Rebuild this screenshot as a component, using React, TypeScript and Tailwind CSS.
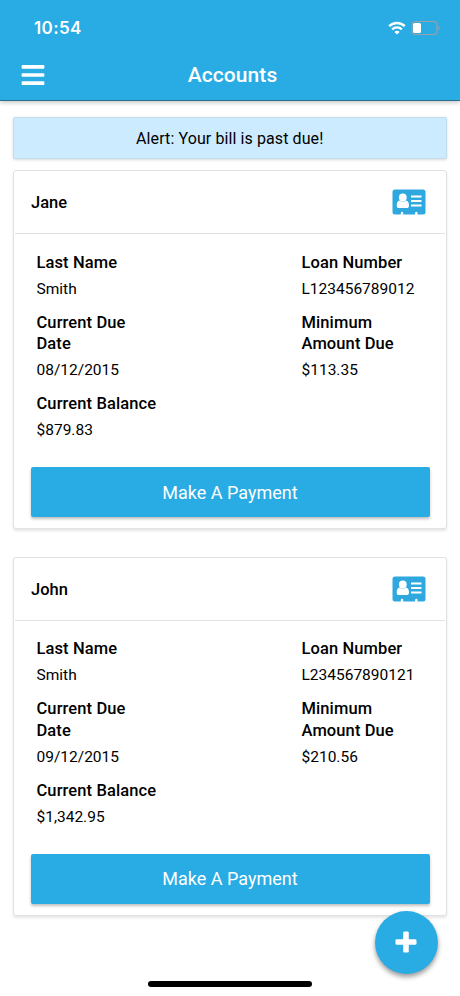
import {FaBars} from 'react-icons/fa'

const accounts = [
    {
        name: 'Jane',
        lastName: 'Smith',
        loanNumber: 'L123456789012',
        dueDate: '08/12/2015',
        minimumDue: '$113.35',
        balance: '$879.83',
    },
    {
        name: 'John',
        lastName: 'Smith',
        loanNumber: 'L234567890121',
        dueDate: '09/12/2015',
        minimumDue: '$210.56',
        balance: '$1,342.95',
    },
]

type Account = (typeof accounts)[number]

function WifiIcon() {
  return (
    <svg className="w-[18px] h-[14px]" viewBox="0 0 18 14" fill="none">
        <path d="M1.2 5.1C5.6 0.8 12.4 0.8 16.8 5.1" stroke="white" strokeWidth="2.5"/>
        <path d="M4.1 8.3C6.9 5.7 11.1 5.7 13.9 8.3" stroke="white" strokeWidth="2.4"/>
        <path d="M9 13.6L6.4 10.9C7.9 9.5 10.1 9.5 11.6 10.9Z" fill="white"/>
    </svg>
  )
}

function BatteryIcon() {
  return (
    <svg className="w-[30px] h-[16px]" viewBox="0 0 30 16" fill="none">
        <rect x="1" y="1.5" width="25" height="13" rx="3.2" stroke="#9a9fa8" strokeWidth="1.2"/>
        <rect x="2" y="3" width="8" height="10" rx="1.5" fill="white"/>
        <path d="M27.4 6V10C28.3 9.7 28.8 9 28.8 8C28.8 7 28.3 6.3 27.4 6Z" fill="#9a9fa8"/>
    </svg>
  )
}

function CardIcon() {
  return (
    <svg className="w-[34px] h-[26px]" viewBox="0 0 34 26" fill="none">
        <path d="M3 0.5H31A2.5 2.5 0 0 1 33.5 3V23A2.5 2.5 0 0 1 31 25.5H25.5V24A1.2 1.2 0 0 0 23.1 24V25.5H11.2V24A1.2 1.2 0 0 0 8.8 24V25.5H3A2.5 2.5 0 0 1 0.5 23V3A2.5 2.5 0 0 1 3 0.5Z" fill="#2fa8e0"/>
        <ellipse cx="10.8" cy="8.6" rx="3.9" ry="4.1" fill="white"/>
        <path d="M7.7 11.6C9.5 13.2 12.1 13.2 13.9 11.6C16 11.9 17 13.6 17 16.4C17 18 16.1 19 14.8 19H6.8C5.5 19 4.7 18 4.7 16.4C4.7 13.6 5.6 11.9 7.7 11.6Z" fill="white"/>
        <path d="M19 7.5H29.5M19 12H29.5M19 16.6H29.5" stroke="white" strokeWidth="2"/>
    </svg>
  )
}

function PlusIcon() {
  return (
    <svg className="size-[22px]" viewBox="0 0 22 22" fill="white">
        <rect x="0.5" y="8.2" width="21" height="5.6" rx="1.3"/>
        <rect x="8.2" y="0.5" width="5.6" height="21" rx="1.3"/>
    </svg>
  )
}

function Field({label, value}: {label: string; value: string}) {
  return (
    <div className="mb-[11.5px]">
        <dt className="font-medium leading-[21.5px]">{label}</dt>
        <dd className="mt-[5.5px] text-[15.5px] leading-[21.5px] tracking-normal">{value}</dd>
    </div>
  )
}

function AccountCard({account}: {account: Account}) {
  return (
    <section className="h-[359px] rounded-[3px] border border-[#e2e2e2] bg-white shadow-[0_2px_3px_rgba(0,0,0,0.1)]">
        <div className="mx-px h-[63px] flex items-center justify-between border-b border-[#e2e2e2] pl-4 pr-[19px]">
            <h2 className="pt-[3px] text-[16.5px] font-medium">{account.name}</h2>
            <CardIcon/>
        </div>

        <dl className="flex h-[233px] justify-between pt-[17.6px] pl-[22.5px] pr-[23px] text-[16.5px] tracking-[0.1px]">
            <div className="w-[125px]">
                <Field label="Last Name" value={account.lastName}/>
                <div className="w-[100px]"><Field label="Current Due Date" value={account.dueDate}/></div>
                <Field label="Current Balance" value={account.balance}/>
            </div>
            <div className="w-[121px]">
                <Field label="Loan Number" value={account.loanNumber}/>
                <div className="w-[100px]"><Field label="Minimum Amount Due" value={account.minimumDue}/></div>
            </div>
        </dl>

        <button className="ml-[16.5px] block h-[50px] w-[399px] rounded-[2px] bg-[#29abe4] pt-px text-lg text-white shadow-[0_2px_3px_rgba(0,0,0,0.25)]">Make A Payment</button>
    </section>
  )
}

export default function App() {
  return (
    <div className="relative flex h-[996px] w-[460px] flex-col overflow-hidden bg-white font-[Roboto,sans-serif] text-base text-black">
        <header className="h-[101px] shrink-0 border-b border-[#2b6f8c] bg-[#29abe4] text-white shadow-[0_2px_4px_rgba(0,0,0,0.2)]">
            <div className="flex h-[50px] items-center justify-between pt-[6px] pl-[34px] pr-[19px]">
                <span className="pt-px font-[Inter,sans-serif] text-[17px] font-semibold tracking-[0.4px]">10:54</span>
                <div className="flex items-center gap-[5px]">
                    <WifiIcon/>
                    <BatteryIcon/>
                </div>
            </div>
            <div className="grid h-[50px] grid-cols-[1fr_auto_1fr] items-center pl-[20px] pr-[15px]">
                <FaBars className="size-[26px]"/>
                <h1 className="pt-px text-[21px] font-medium tracking-[0.1px]">Accounts</h1>
            </div>
        </header>

        <main className="flex flex-col pl-[13px] pr-[13.5px] pt-4">
            <div className="flex h-[42px] items-center justify-center rounded-[2px] border border-[#c3dce9] bg-[#cdebff] pt-px text-[16px] tracking-[0.1px] shadow-[0_1px_3px_rgba(0,0,0,0.15)]">Alert: Your bill is past due!</div>
            <div className="mt-[11px] flex flex-col gap-[27.5px]">
                {accounts.map((account) => (
                    <AccountCard key={account.name} account={account}/>
                ))}
            </div>
        </main>

        <button aria-label="Add account" className="absolute left-[375px] top-[911px] flex size-[63px] items-center justify-center rounded-full bg-[#29abe4] pr-[2px] pb-[2px] text-white shadow-[0_3px_5px_rgba(0,0,0,0.4)]">
            <PlusIcon/>
        </button>
        <div className="absolute bottom-[9px] left-[148px] h-[6px] w-[164px] rounded-full bg-black"></div>
    </div>
  )
}
